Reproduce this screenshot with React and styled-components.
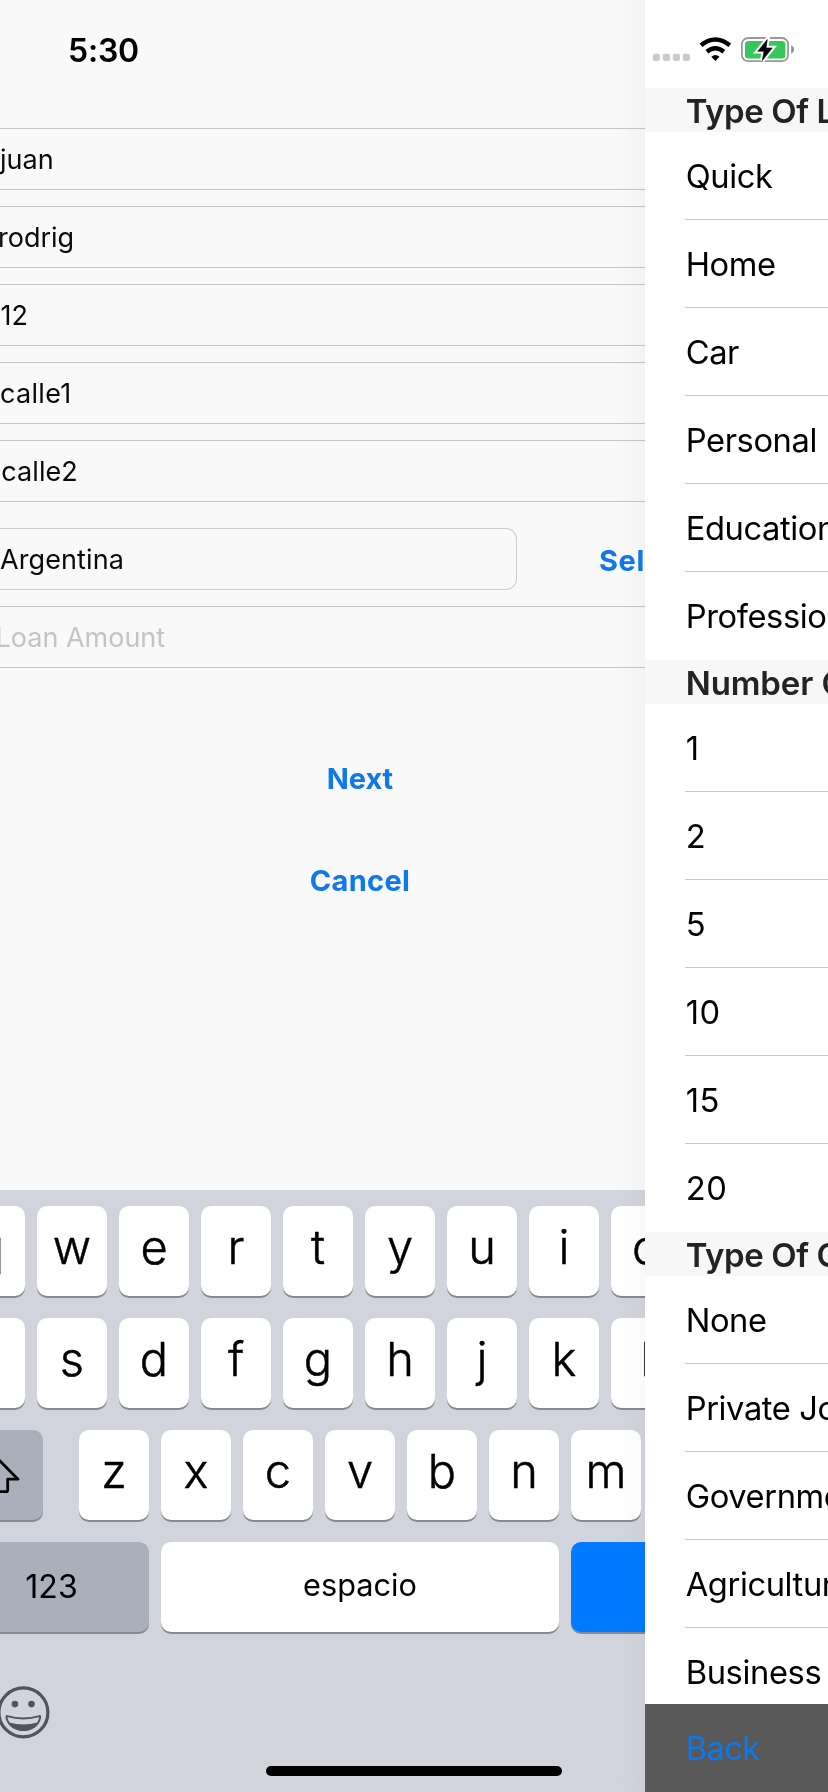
import React from "react";
import styled, { createGlobalStyle } from "styled-components";

const GlobalStyle = createGlobalStyle`
  * { box-sizing: border-box; }
  body { margin: 0; background: #f9f9f9; font-family: Inter, Roboto, sans-serif; color: #0a0a0a; }
`;

const Screen = styled.div`
  position: relative;
  display: flex;
  width: 828px;
  height: 1792px;
  overflow: hidden;
  will-change: transform;
`;

const FormPage = styled.main`
  position: relative;
  display: flex;
  flex-direction: column;
  width: 645px;
  height: 100%;
  overflow: hidden;
  background: #f9f9f9;
`;

const EdgeShadow = styled.div`
  position: absolute;
  inset: 0 0 0 auto;
  width: 28px;
  pointer-events: none;
  background: linear-gradient(to right, rgba(0, 0, 0, 0), rgba(0, 0, 0, 0.006) 40%, rgba(0, 0, 0, 0.025));
`;

const Clock = styled.div`
  height: 128px;
  padding-left: 68px;
  font-size: 32px;
  font-weight: 600;
  line-height: 101px;
  letter-spacing: -0.2px;
  color: #000;
`;

const Fields = styled.div`
  display: flex;
  flex-direction: column;
  gap: 16px;
`;

const Field = styled.div`
  height: 62px;
  border: solid #c5c5c6;
  border-width: 1px 0;
  padding-left: ${(p) => Math.max(p.$start || 0, 0)}px;
  text-indent: ${(p) => Math.min(p.$start || 0, 0)}px;
  font-size: 27px;
  line-height: 62px;
  letter-spacing: ${(p) => p.$tracking || 0}px;
  white-space: pre;
  color: ${(p) => (p.$placeholder ? "#c4c4c6" : "#0a0a0a")};
`;

const CountryRow = styled.div`
  display: flex;
  justify-content: space-between;
  margin-top: 10px;
`;

const CountryField = styled(Field)`
  width: 517px;
  border-color: #cdcdce;
  border-width: 1px 1px 1px 0;
  border-radius: 0 11px 11px 0;
`;

const LinkButton = styled.button`
  border: 0;
  padding: 0;
  background: none;
  font: 700 29px/40px Inter, Roboto, sans-serif;
  letter-spacing: ${(p) => p.$tracking || 0}px;
  color: #0f78ea;
`;

const SelectButton = styled(LinkButton)`
  width: 46px;
  padding-top: 3px;
  text-align: left;
  white-space: nowrap;
`;

const Actions = styled.div`
  display: flex;
  flex: 1;
  flex-direction: column;
  align-items: center;
  gap: 62px;
  width: 720px;
  padding-top: 91px;
`;

const Keyboard = styled.section`
  display: flex;
  flex-direction: column;
  gap: 22px;
  height: 602px;
  padding-top: 16px;
  background: #d1d4dc;
  color: #000;
`;

const KeyRow = styled.div`
  display: flex;
  gap: 12px;
  width: 800px;
  margin-left: -45px;
`;

const Key = styled.div`
  flex: none;
  width: ${(p) => p.$width || 70}px;
  height: 90px;
  border-radius: 10px;
  background: ${(p) => p.$fill || "#fff"};
  box-shadow: 0 2px 0 #878a91;
  font-size: 47px;
  font-weight: 300;
  line-height: 82px;
  text-align: center;
  -webkit-text-stroke: 0.5px #000;
`;

const ShiftKey = styled(Key)`
  display: flex;
  align-items: center;
  justify-content: center;
  margin-right: 24px;
`;

const WordKey = styled(Key)`
  font-size: ${(p) => p.$size}px;
  font-weight: 400;
  line-height: ${(p) => p.$line}px;
  letter-spacing: ${(p) => p.$tracking || 0}px;
  -webkit-text-stroke: 0;
`;

const NumberKey = styled(WordKey)`
  padding-right: 1px;
`;

const KeyboardTools = styled.div`
  display: flex;
  margin: 32px 0 0 -3px;
`;

const OptionsPanel = styled.aside`
  display: flex;
  flex-direction: column;
  width: 183px;
  height: 100%;
  overflow: hidden;
  background: #fff;
  color: #000;
`;

const StatusIcons = styled.div`
  flex: none;
  height: 88px;
`;

const GroupTitle = styled.h2`
  flex: none;
  height: 44px;
  margin: 0;
  padding-left: 40.7px;
  background: #f7f7f7;
  font-size: 33px;
  font-weight: 600;
  line-height: 46px;
  letter-spacing: ${(p) => p.$tracking}px;
  white-space: nowrap;
  color: #232323;
`;

const Option = styled.div`
  flex: none;
  height: 88px;
  margin-left: 40px;
  border-bottom: 1px solid #c8c7cc;
  text-indent: 0.7px;
  font-size: 32.7px;
  line-height: 88px;
  letter-spacing: ${(p) => (p.$numeric ? 0.6 : -0.4)}px;
  white-space: nowrap;
  &:last-child { border-bottom-color: transparent; }
`;

const OptionGroups = styled.div`
  height: 1616px;
  overflow: hidden;
`;

const BackBar = styled.footer`
  flex: none;
  height: 88px;
  padding-left: 40.7px;
  background: #595959;
  font-size: 32.7px;
  line-height: 89px;
  letter-spacing: -0.6px;
  color: #0f78ea;
`;

const HomeIndicator = styled.div`
  position: absolute;
  bottom: 16px;
  left: 266px;
  width: 296px;
  height: 10px;
  border-radius: 5px;
  background: #000;
`;

const fields = [
  { text: "juan", start: 0 },
  { text: "rodrig", start: -2 },
  { text: "12", start: 0.5 },
  { text: "calle1", start: 0, tracking: 0.3 },
  { text: "calle2", start: 1.2, tracking: 0.1 },
];

const groups = [
  { title: "Type Of Loan", tracking: -0.4, options: ["Quick", "Home", "Car", "Personal", "Education", "Professional"] },
  { title: "Number Of Years", tracking: -0.1, numeric: true, options: ["1", "2", "5", "10", "15", "20"] },
  { title: "Type Of Occupation", tracking: -0.4, options: ["None", "Private Job", "Government", "Agriculture", "Business"] },
];

function StatusGlyphs() {
  const bolt = "M767.3 39.5 757.8 51.3H764L762.3 60.5 772.2 48H766Z";
  return (
    <svg width="183" height="88" viewBox="645 0 183 88">
      {[652.8, 662.8, 672.8, 682.8].map((x) => (
        <rect key={x} x={x} y="53.8" width="7.2" height="7.2" rx="2" fill="#cbcbcb" />
      ))}
      <g fill="none" stroke="#000" strokeWidth="4.4">
        <path d="M701 45.3Q715.3 33.5 729.8 45.3" />
        <path d="M706.9 51.7Q715.3 44.8 723.8 51.7" />
      </g>
      <path d="M711.3 56.7Q715.3 53.4 719.5 56.7L715.4 60.9Z" />
      <rect x="741.9" y="38" width="46.2" height="23.2" rx="6.2" fill="none" stroke="#999" strokeWidth="1.8" />
      <rect x="745" y="41" width="40.4" height="17.4" rx="3.2" fill="#35c759" />
      <path d="M791.2 45.2Q794 46.4 794 49.5T791.2 53.8Z" fill="#8e8e8e" />
      <path d={bolt} fill="#fff" stroke="#fff" strokeWidth="4.6" />
      <path d={bolt} stroke="#000" strokeWidth="0.6" />
    </svg>
  );
}

function ShiftGlyph() {
  return (
    <svg width="44" height="40" viewBox="0 0 44 40" fill="none" stroke="#000" strokeWidth="2.8" strokeLinejoin="round">
      <path d="M21.5 4.5 41 24.2H30.7V35Q30.7 36.7 29 36.7H14Q12.3 36.7 12.3 35V24.2H2Z" />
    </svg>
  );
}

function SmileyGlyph() {
  return (
    <svg width="53" height="53" viewBox="0 0 53 53">
      <circle cx="26.4" cy="26.4" r="24.5" fill="none" stroke="#50545c" strokeWidth="3.2" />
      <circle cx="17.9" cy="18.1" r="3.3" fill="#50545c" />
      <circle cx="34.5" cy="18.1" r="3.3" fill="#50545c" />
      <path d="M10.3 30.1Q26.4 34.8 42.5 30.1Q43.6 29.9 43 32.2C39 48 14 48 9.6 32.2Q9.2 29.9 10.3 30.1Z" fill="none" stroke="#50545c" strokeWidth="2" />
      <path d="M12.4 36.6Q26.4 40.4 40.4 36.6C35 46.6 18 46.6 12.4 36.6Z" fill="#50545c" />
    </svg>
  );
}

export default function App() {
  return (
    <>
      <GlobalStyle />
      <Screen>
        <FormPage>
          <Clock>5:30</Clock>
          <Fields>
            {fields.map((f) => (
              <Field key={f.text} $start={f.start} $tracking={f.tracking}>{f.text}</Field>
            ))}
            <CountryRow>
              <CountryField $start={0} $tracking={0.1}>Argentina</CountryField>
              <SelectButton $tracking={0.6}>Select</SelectButton>
            </CountryRow>
            <Field $start={-4.5} $placeholder>Loan Amount</Field>
          </Fields>
          <Actions>
            <LinkButton $tracking={-0.1}>Next</LinkButton>
            <LinkButton $tracking={0.3}>Cancel</LinkButton>
          </Actions>
          <Keyboard>
            {["qwertyuio", "asdfghjkl"].map((row) => (
              <KeyRow key={row}>
                {[...row].map((k) => <Key key={k}>{k}</Key>)}
              </KeyRow>
            ))}
            <KeyRow>
              <ShiftKey $width={88} $fill="#a9afbb"><ShiftGlyph /></ShiftKey>
              {[..."zxcvbnm"].map((k) => <Key key={k}>{k}</Key>)}
            </KeyRow>
            <KeyRow>
              <NumberKey $width={194} $fill="#a9afbb" $size={32} $line={89} $tracking={0.1}>123</NumberKey>
              <WordKey $width={398} $size={30.7} $line={86}>espacio</WordKey>
              <Key $width={194} $fill="#007aff" />
            </KeyRow>
            <KeyboardTools><SmileyGlyph /></KeyboardTools>
          </Keyboard>
          <EdgeShadow />
        </FormPage>
        <OptionsPanel>
          <StatusIcons><StatusGlyphs /></StatusIcons>
          <OptionGroups>
            {groups.map((g) => (
              <section key={g.title}>
                <GroupTitle $tracking={g.tracking}>{g.title}</GroupTitle>
                {g.options.map((o) => <Option key={o} $numeric={g.numeric}>{o}</Option>)}
              </section>
            ))}
          </OptionGroups>
          <BackBar>Back</BackBar>
        </OptionsPanel>
        <HomeIndicator />
      </Screen>
    </>
  );
}
